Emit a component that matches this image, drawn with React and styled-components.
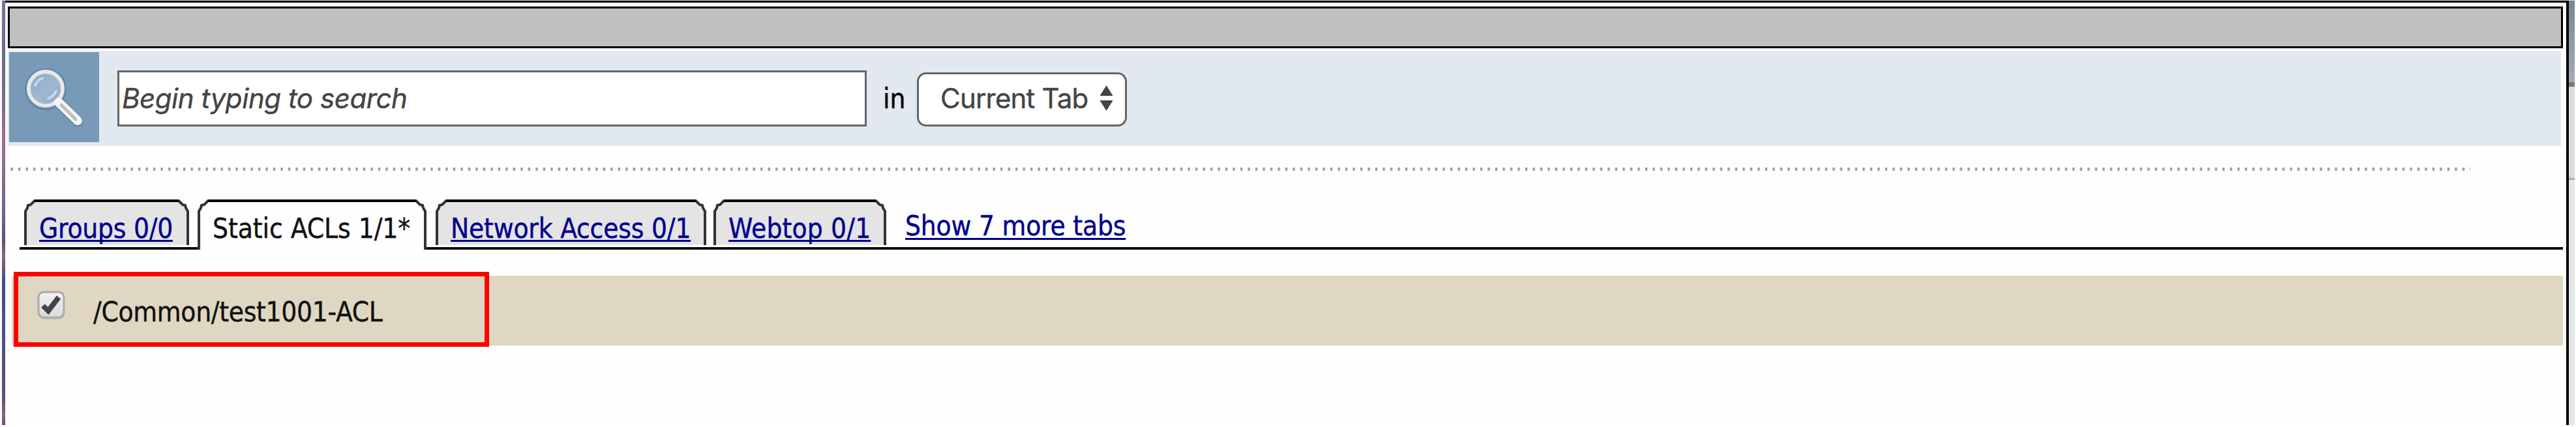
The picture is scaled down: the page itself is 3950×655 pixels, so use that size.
import React from "react";
import styled, { createGlobalStyle } from "styled-components";

const Global = createGlobalStyle`
  * { box-sizing: border-box; }
  body { margin: 0; background: #fff; overflow: hidden; }
`;

const tahoma = `"DejaVu Sans Condensed", "DejaVu Sans", sans-serif`;

const Page = styled.div`
  display: grid;
  grid-template-columns: 3px 5px 3931px 9px;
  width: 3950px;
  height: 652px;
  background: #fefefe;
  border-top: 1px solid #d8dfd9;
  font-family: ${tahoma};
  font-stretch: condensed;
  font-size: 42px;
  color: #111;
  -webkit-text-stroke: 0.4px currentColor;
`;

const LeftEdge = styled.div`
  grid-column: 2;
  background: linear-gradient(#7474a4 0, #69698f 90px, #7b6a97 160px, #9c6e90 200px, #9c6e90 235px, #7e698f 285px, #6a6a9a 315px, #5c507c 370px, #8a6084 390px, #465080 430px, #4f5080 540px, #60507c 610px, #8a6085 635px, #6a5078 651px);
`;

const Panel = styled.main`
  display: flex;
  flex-direction: column;
  border-top: 3px solid #000;
  border-right: 4px solid #000;
`;

const RightEdge = styled.div`
  display: flex;
  flex-direction: column;
`;

const EdgeTop = styled.div`
  height: 132px;
  border-bottom: 7px solid #737b84;
  background: linear-gradient(#7c8590, #a4acb8);
`;

const EdgeMid = styled.div`
  height: 143px;
  background: #dbdbdb;
  border-bottom: 3px solid #aaa;
`;

const EdgeLow = styled.div`
  flex: 1;
  background: #e6e6e6;
`;

const TitleBar = styled.div`
  width: 3918px;
  height: 64px;
  margin: 6px 0 0 4px;
  border: 3px solid #000;
  background: #c0c0c0;
`;

const SearchBar = styled.div`
  display: flex;
  align-items: flex-start;
  width: 3915px;
  height: 146px;
  margin: 4px 0 0 4px;
  padding: 2px 0 0 2px;
  background: #e1e8ef;
`;

const IconTile = styled.div`
  width: 138px;
  height: 138px;
  background: #7899b8;
`;

const Field = styled.div`
  width: 1149px;
  height: 86px;
  margin: 28px 0 0 28px;
  padding-left: 4px;
  border: 3px solid #666;
  background: #fff;
  font: italic 42px/80px Inter, sans-serif;
  letter-spacing: ${(p) => p.$track}px;
  color: #444;
  white-space: nowrap;
`;

const InLabel = styled.span`
  width: 77px;
  margin-top: 29px;
  padding-left: 25px;
  line-height: 86px;
  color: #000;
`;

const Select = styled.div`
  display: flex;
  align-items: center;
  justify-content: space-between;
  width: 322px;
  height: 83px;
  margin-top: 31px;
  padding: 0 18px 4px 33px;
  border: 3px solid #666;
  border-radius: 14px;
  background: #fff;
  font: 42px/77px Inter, sans-serif;
  letter-spacing: ${(p) => p.$track}px;
  color: #444;
  white-space: nowrap;
`;

const Dots = styled.div`
  width: 3779px;
  height: 5px;
  margin: 33px 0 0 1px;
  background: repeating-linear-gradient(90deg, transparent 0, transparent 6.6px, #a0a0a0 8.3px, #a0a0a0 10.4px, transparent 11.496px);
`;

const Tabs = styled.nav`
  display: flex;
  width: 3900px;
  height: 77px;
  margin: 44px 0 0 22px;
`;

const Gap = styled.div`
  width: ${(p) => p.$w}px;
  flex: ${(p) => (p.$grow ? 1 : "none")};
  border-bottom: 4px solid #0a0a0a;
`;

const Tab = styled.div`
  position: relative;
  flex: none;
  width: ${(p) => p.$w}px;
  border-bottom: ${(p) => (p.$active ? 0 : 4)}px solid #0a0a0a;
`;

const TabShape = styled.svg`
  position: absolute;
  left: 0;
  top: 0;
`;

const TabText = styled.span`
  position: relative;
  display: block;
  padding-left: 23px;
  line-height: 50px;
  margin-top: 20px;
  letter-spacing: ${(p) => p.$track}px;
  color: ${(p) => (p.$active ? "#111" : "#00008f")};
  white-space: nowrap;
`;

const TabLabel = styled.span`
  text-decoration: ${(p) => (p.$active ? "none" : "underline")};
  text-decoration-thickness: 3px;
  text-underline-offset: 3px;
  text-decoration-skip-ink: none;
`;

const More = styled.span`
  display: block;
  width: max-content;
  margin: 16px 0 0 29px;
  line-height: 50px;
  letter-spacing: ${(p) => p.$track}px;
  color: #00008f;
  text-decoration: underline;
  text-decoration-thickness: 3px;
  text-underline-offset: 4px;
  white-space: nowrap;
`;

const Row = styled.div`
  position: relative;
  display: flex;
  width: 3912px;
  height: 107px;
  margin: 40px 0 0 10px;
  padding-left: 38px;
  background: #dfd7c1;
`;

const Highlight = styled.div`
  position: absolute;
  left: 3px;
  top: -6px;
  width: 729px;
  height: 115px;
  border: 7px solid #f00;
`;

const CheckIcon = styled.svg`
  width: 46px;
  height: 48px;
  margin-top: 21px;
`;

const RowText = styled.span`
  margin: 31px 0 0 41px;
  line-height: 50px;
  letter-spacing: ${(p) => p.$track}px;
  white-space: nowrap;
`;

const Magnifier = () => (
  <svg width="138" height="138" viewBox="0 0 138 138">
    <defs>
      <linearGradient id="lens" x1="0" y1="0" x2="1" y2="1">
        <stop offset="0" stopColor="#8ba9c6" />
        <stop offset=".55" stopColor="#9fb8d2" />
        <stop offset="1" stopColor="#86a6c6" />
      </linearGradient>
    </defs>
    <g fill="none" strokeLinecap="round">
      <circle cx="56" cy="57" r="27" stroke="#6787a5" strokeWidth="10" />
      <path d="M78 79 105 106" stroke="#6787a5" strokeWidth="17" />
      <circle cx="56" cy="56" r="25.500" fill="url(#lens)" stroke="#e6e9eb" strokeWidth="7" />
      <circle cx="56" cy="56" r="22.500" stroke="#aab1b7" strokeWidth="1.500" />
      <path d="M76 77 105 105" stroke="#f6f6f6" strokeWidth="14" />
      <path d="M80 81 102 103" stroke="#bfbfbd" strokeWidth="5" />
      <path d="M40 51Q43 43 51 40M60 71Q68 68 72 60" stroke="#c9d7e6" strokeWidth="4" />
    </g>
  </svg>
);

const tabs = [
  { label: "Groups 0/0", w: 253, gap: 13, track: -0.25 },
  { label: "Static ACLs 1/1*", w: 351, gap: 14, track: -0.05, active: true },
  { label: "Network Access 0/1", w: 415, gap: 11, track: -0.2 },
  { label: "Webtop 0/1", w: 265, gap: 0, track: 0.15 },
];

const TabItem = ({ label, w, track, active }) => {
  const foot = active ? 77 : 70;
  const outline = `M2 ${foot}V18L5 13 6 9 10 8 16 2H${w - 16}L${w - 10} 8 ${w - 6} 9 ${w - 5} 13 ${w - 2} 18V${foot}`;
  return (
    <Tab $w={w} $active={active}>
      <TabShape width={w} height="77">
        <path d={outline} fill={active ? "#fefefe" : "#e4e4e4"} stroke="#333" strokeWidth="4" />
        <path d={`M16 2H${w - 16}`} stroke="#000" strokeWidth="4" />
      </TabShape>
      <TabText $track={track} $active={active}>
        <TabLabel $active={active}>{label}</TabLabel>
      </TabText>
    </Tab>
  );
};

export default function App() {
  return (
    <>
      <Global />
      <Page>
        <LeftEdge />
        <Panel>
          <TitleBar />
          <SearchBar>
            <IconTile><Magnifier /></IconTile>
            <Field $track={-0.45}>Begin typing to search</Field>
            <InLabel>in</InLabel>
            <Select $track={-0.8}>
              Current Tab
              <svg width="21" height="39" viewBox="0 0 21 39">
                <path d="M10.500 0 20.500 16H.5ZM10.500 39 20.500 23H.5Z" fill="#444" />
              </svg>
            </Select>
          </SearchBar>
          <Dots />
          <Tabs>
            <Gap $w={7} />
            {tabs.map((t) => (
              <React.Fragment key={t.label}>
                <TabItem {...t} />
                <Gap $w={t.gap} />
              </React.Fragment>
            ))}
            <Gap $grow><More $track={-0.2}>Show 7 more tabs</More></Gap>
          </Tabs>
          <Row>
            <CheckIcon viewBox="0 0 46 48">
              <defs>
                <linearGradient id="box" x1="0" y1="0" x2="0" y2="1">
                  <stop offset="0" stopColor="#f2f2f2" />
                  <stop offset="1" stopColor="#d9d9d9" />
                </linearGradient>
              </defs>
              <rect x="3" y="5" width="40" height="41" rx="9" fill="#c6c0b0" />
              <rect x="3" y="4" width="39" height="39" rx="8" fill="url(#box)" stroke="#aaa" strokeWidth="3" />
              <path d="m10 25 8 8L34 12" fill="none" stroke="#444" strokeWidth="8" />
            </CheckIcon>
            <RowText $track={-0.3}>/Common/test1001-ACL</RowText>
            <Highlight />
          </Row>
        </Panel>
        <RightEdge>
          <EdgeTop />
          <EdgeMid />
          <EdgeLow />
        </RightEdge>
      </Page>
    </>
  );
}
